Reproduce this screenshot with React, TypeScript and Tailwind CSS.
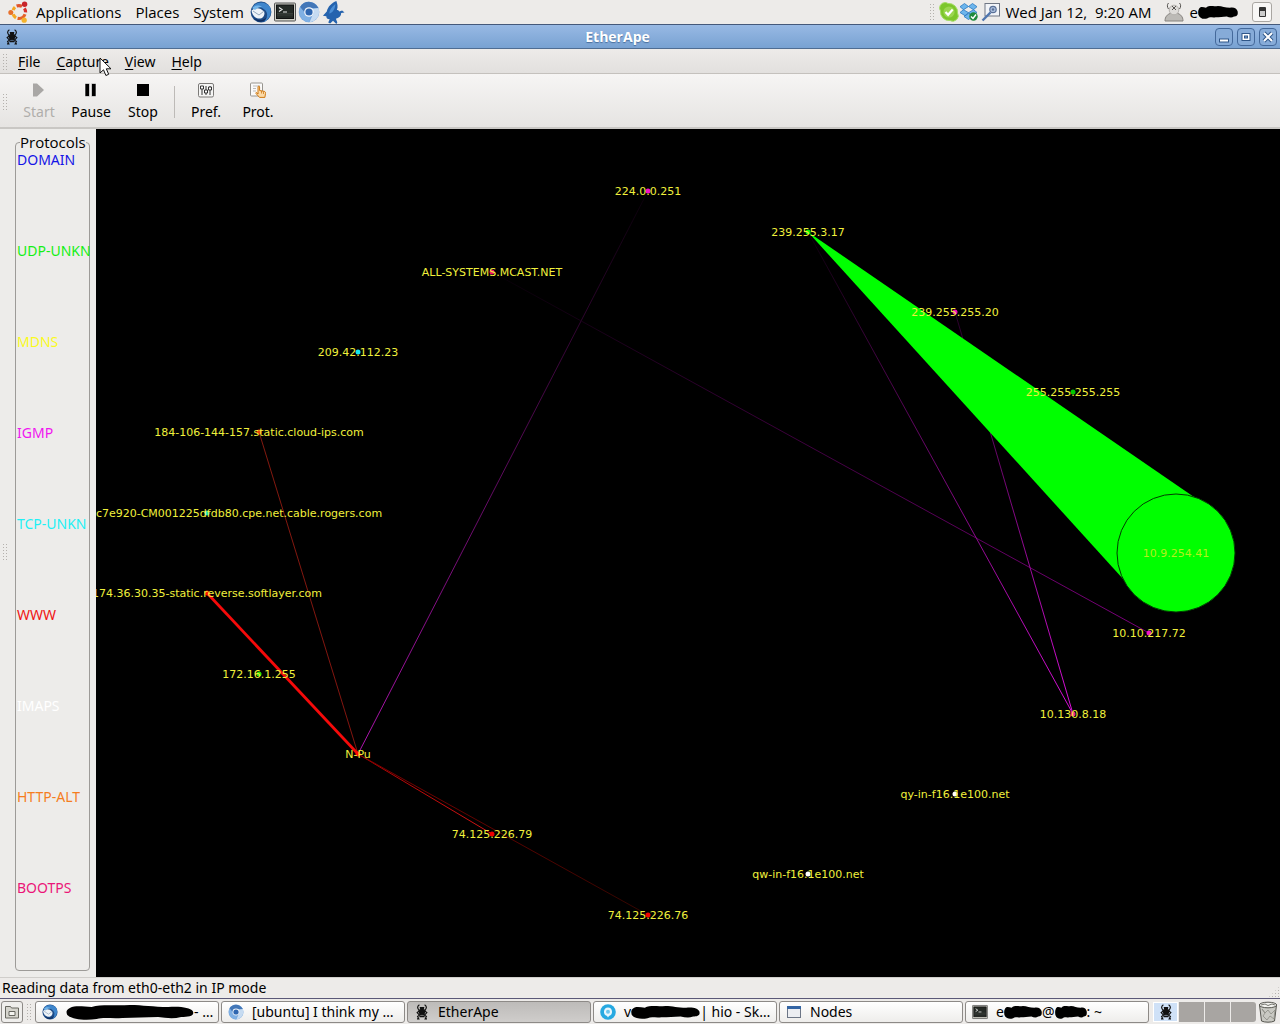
import type { ReactNode } from "react";

interface NodeItem {
    name: string;
    x: number;
    y: number;
    color: string;
    labelX?: number;
}

interface Link {
    id: string;
    from: [number, number];
    to: [number, number];
    fromColor: string;
    toColor: string;
}

const protocols = [
    { name: "DOMAIN", color: "text-[#1414e6]" },
    { name: "UDP-UNKN", color: "text-[#14f014]" },
    { name: "MDNS", color: "text-[#fafa1e]" },
    { name: "IGMP", color: "text-[#f014f0]" },
    { name: "TCP-UNKN", color: "text-[#1ef0f5]" },
    { name: "WWW", color: "text-[#f01414]" },
    { name: "IMAPS", color: "text-white" },
    { name: "HTTP-ALT", color: "text-[#f57d1e]" },
    { name: "BOOTPS", color: "text-[#eb1478]" },
];

const nodes: NodeItem[] = [
    { name: "224.0.0.251", x: 552, y: 62, color: "#f010c8" },
    { name: "239.255.3.17", x: 712, y: 103, color: "#00f000" },
    { name: "ALL-SYSTEMS.MCAST.NET", x: 396, y: 143, color: "#f01464" },
    { name: "239.255.255.20", x: 859, y: 183, color: "#f010b4" },
    { name: "209.42.112.23", x: 262, y: 223, color: "#14e6f0" },
    { name: "255.255.255.255", x: 977, y: 263, color: "#00c800" },
    { name: "184-106-144-157.static.cloud-ips.com", x: 163, y: 303, color: "#e63c00" },
    { name: "c7e920-CM001225dfdb80.cpe.net.cable.rogers.com", x: 111, y: 384, color: "#14e6c8", labelX: 143 },
    { name: "174.36.30.35-static.reverse.softlayer.com", x: 111, y: 464, color: "#ff1400" },
    { name: "10.10.217.72", x: 1053, y: 504, color: "#f014c8" },
    { name: "172.16.1.255", x: 163, y: 545, color: "#28e600" },
    { name: "10.130.8.18", x: 977, y: 585, color: "#f02882" },
    { name: "N-Pu", x: 262, y: 625, color: "#ff0a00" },
    { name: "qy-in-f16.1e100.net", x: 859, y: 665, color: "#ffffff" },
    { name: "74.125.226.79", x: 396, y: 705, color: "#f00000" },
    { name: "qw-in-f16.1e100.net", x: 712, y: 745, color: "#ffffff" },
    { name: "74.125.226.76", x: 552, y: 786, color: "#f00000" },
];

const links: Link[] = [
    { id: "l1", from: [262, 625], to: [552, 62], fromColor: "#af14af", toColor: "#080008" },
    { id: "l2", from: [1053, 504], to: [396, 143], fromColor: "#7d007d", toColor: "#050005" },
    { id: "l3", from: [977, 585], to: [712, 103], fromColor: "#dc0fdc", toColor: "#0a000a" },
    { id: "l4", from: [977, 585], to: [859, 183], fromColor: "#dc0fdc", toColor: "#280028" },
    { id: "l5", from: [163, 303], to: [262, 625], fromColor: "#82190f", toColor: "#82140f" },
    { id: "l6", from: [262, 625], to: [396, 705], fromColor: "#aa0000", toColor: "#d21414" },
    { id: "l7", from: [262, 625], to: [552, 786], fromColor: "#820000", toColor: "#320500" },
];

const tile = "flex shrink-0 items-center justify-center";

function Ape({ className }: { className: string }) {
    return (
        <svg viewBox="0 0 16 16" className={className} fill="none" stroke="#111" strokeWidth="1.2">
            <path d="M5.4.8C3 2.200 3 5 5.600 6.200M10.600.8C13 2.200 13 5 10.400 6.200" />
            <path d="M6.400 3.600h3.200l-.4 2.400H6.800zM5 6.400h6l-1.200 4.400H6.200z" fill="#111" />
            <path d="M5.200 7 3.200 8.600l2 2.200M10.800 7l2 1.600-2 2.200M6.400 10.400l-2.800 2 1.200 2.400H3M9.600 10.400l2.800 2-1.200 2.400H13M5.400 12.600h5.200" />
        </svg>
    );
}

function UbuntuLogo() {
    return (
        <svg viewBox="0 0 22 22" className="size-[22px]" fill="none">
            <path d="M7 6.2A6.4 6.4 0 0 0 5.2 9.2M5.2 13.2A6.4 6.4 0 0 0 8 16.8" stroke="#f4a824" strokeWidth="3.2" />
            <path d="M8.6 5A6.6 6.6 0 0 1 14 5.4" stroke="#e0542c" strokeWidth="3.2" />
            <path d="M16.4 7.4A6.6 6.6 0 0 1 17.6 11.4" stroke="#d8302a" strokeWidth="3.2" />
            <path d="M17 13.2A6.6 6.6 0 0 1 9.6 17.4" stroke="#e4622a" strokeWidth="3.2" />
            <circle cx="2.8" cy="11.6" r="2.5" fill="#e8702c" />
            <circle cx="16.6" cy="3.2" r="2.7" fill="#c8242a" />
            <circle cx="16.2" cy="19.2" r="2.6" fill="#f4b42c" />
        </svg>
    );
}

function Thunderbird({ className }: { className: string }) {
    return (
        <svg viewBox="0 0 22 22" className={className}>
            <circle cx="11" cy="11" r="10.4" fill="#1c4a86" />
            <path d="M3 6C6 0 16 0 20 6c2 6 0 12-6 15 4-5 4-9 1-12C11 5 6 5 3 6z" fill="#3f86cc" />
            <path d="M1.500 9.500c4-3.500 9-3 12.500 1 1.500 3-1 7-4.500 7C5 17.500 2 14 1.500 9.500z" fill="#eef3f8" />
            <path d="m3 10 6 4 4.600-3.600" stroke="#93a8bd" fill="none" />
            <path d="M2 7c3-3 7-3 10-1-3 0-5 1-7 3z" fill="#74b6ea" />
            <path d="M4 17c4 3 9 3 13-1-2 5-9 7-13 1z" fill="#0f2c5c" />
        </svg>
    );
}

function Terminal({ className }: { className: string }) {
    return (
        <svg viewBox="0 0 22 20" className={className}>
            <rect x=".5" y="1" width="21" height="18" rx="1" fill="#cfcfc6" stroke="#555" />
            <rect x="2.500" y="3" width="17" height="13.500" fill="#252a26" stroke="#111" />
            <path d="m5 5.500 3 2-3 2M9 10h4" stroke="#e8e8e8" strokeWidth="1.200" fill="none" />
            <path d="M3 13h16M3 11.500h16" stroke="#454b46" strokeWidth=".6" />
        </svg>
    );
}

function Chromium({ className }: { className: string }) {
    return (
        <svg viewBox="0 0 22 22" className={className}>
            <circle cx="11" cy="11" r="10.3" fill="#76a6dc" />
            <path d="M2 6C6-1 16-1 20.500 7H11a4.500 4.500 0 0 0-4.500 4z" fill="#4377b8" />
            <path d="M20.500 7c2 6-1 13-9 14.200L15.500 12 14 8z" fill="#c6dbf1" />
            <path d="M2 6c-3 7 2 14 9 15.200l1.500-5.500C9 16 7 14 6.500 12z" fill="#7fb0e4" />
            <circle cx="11" cy="11" r="4.800" fill="#f2f6fb" />
            <circle cx="11" cy="11" r="3.600" fill="#2e66b0" />
        </svg>
    );
}

function Bird() {
    return (
        <svg viewBox="0 0 24 24" className="size-[23px]">
            <path d="M15 0c-5 2-9 6-10 11l-4 4.500 3.500.5c0 2 1 3 3.500 3l-1.500 3.500 2 1 3-3 3.500 3.500 1-1.500-1.500-4c4-1 5.500-3 5.500-6l3.500-.5L21 10l-3 1c-.5-1-1.500-1.500-2.500-1.500C17 6 16 3 15 0z" fill="#2563ae" />
            <path d="M14 3c-4 3-6 6-6.500 10 3.500-1 6-4 6.500-10z" fill="#4c8fd6" />
        </svg>
    );
}

function Skype() {
    return (
        <svg viewBox="0 0 20 20" className="size-5">
            <path d="M6 .5a5.500 5.500 0 0 1 3 1A8.600 8.600 0 0 1 18.500 11 5.500 5.500 0 0 1 11 18.500 8.600 8.600 0 0 1 1.500 9 5.500 5.500 0 0 1 6 .5z" fill="#7cc62c" stroke="#a5dc66" />
            <circle cx="10" cy="10" r="5.600" fill="#9ad650" />
            <path d="m6.500 10 2.600 2.800 4.600-5.200" stroke="#fff" strokeWidth="2.200" fill="none" />
        </svg>
    );
}

function Dropbox() {
    return (
        <svg viewBox="0 0 20 20" className="size-5">
            <path d="m5.500 1.500 4 3-5 3.200-3.500-3zM13.500 1.500l4.500 3.200-3.500 3-5-3.200zM1 10.500l3.500-2.800 5 3-3.500 3zM18 10.500l-3.500-2.800-5 3 3.500 3zM5 14.500l4.500-3 4.500 3-4.500 3z" fill="#6db5ec" stroke="#2a78c0" strokeWidth=".8" />
            <circle cx="14.500" cy="14.500" r="4.200" fill="#1f8a3c" />
            <path d="m12 14.500 2 2 3-4" stroke="#fff" strokeWidth="1.400" fill="none" />
        </svg>
    );
}

function SearchNote() {
    return (
        <svg viewBox="0 0 20 20" className="size-5">
            <rect x="4" y="1.500" width="14.500" height="12.500" fill="#f2f4f8" stroke="#707784" />
            <path d="m1.500 18.500 8-8" stroke="#4f75ae" strokeWidth="2.400" />
            <circle cx="12" cy="7.500" r="3.200" fill="#a9bddb" stroke="#5a7097" strokeWidth="1.200" />
            <circle cx="12" cy="7.500" r="1.200" fill="#5a7097" />
        </svg>
    );
}

function Person() {
    return (
        <svg viewBox="0 0 20 20" className="size-5">
            <path d="M1 19c0-4.500 2.500-6.500 5-7.500h8c2.500 1 5 3 5 7.500z" fill="#bcbab6" stroke="#86837f" />
            <circle cx="10" cy="8" r="4.800" fill="#dedcd9" stroke="#b5b2ae" />
            <path d="m8 4 4 4m0-4L8 8M4.500 1C3 2.500 3 5 4.500 7M15.500 1C17 2.500 17 5 15.500 7" stroke="#55524f" fill="none" />
        </svg>
    );
}

function Trash() {
    return (
        <svg viewBox="0 0 20 22" className="h-[22px] w-5" fill="none" stroke="#55554f">
            <path d="m1.500 4 2 16c3 1.600 10 1.600 13 0l2-16" fill="#c9c9c3" />
            <ellipse cx="10" cy="4" rx="8.700" ry="2.800" fill="#f3f3ef" />
            <path d="m4 8 3 4-2 3 4 4 3-4 4 3 1-9-4 4-3-4-3 3z" stroke="#8b8b84" strokeWidth=".8" />
            <path d="m3 4 4-1 3 1.500L14 3l3 1" strokeWidth=".8" />
        </svg>
    );
}

// Marker stroke drawn over private names
function Scribble({ className }: { className: string }) {
    return (
        <svg viewBox="0 0 100 16" preserveAspectRatio="none" className={className}>
            <path d="M3 4C8 1 14 3 20 3 28 0 38 2 50 1c10 0 18 2 30 2 10-1 17 1 19 4 2 5-3 6-9 6-6 2-12 1-18 0-10 0-18 1-28 1-8 1-14-1-20 1C14 17 4 15 1 11 0 8 0 6 3 4z" fill="#000" />
        </svg>
    );
}

function Grip({ className }: { className: string }) {
    return (
        <span
            aria-hidden="true"
            className={`shrink-0 bg-[radial-gradient(circle,#b4b1ad_0.7px,transparent_1px)] bg-[size:3px_3px] ${className}`}
        />
    );
}

function TopPanel() {
    return (
        <header className="flex h-[25px] shrink-0 items-center border-b border-[#45597a] bg-[#edebe9] px-2 font-['Open_Sans',sans-serif] text-[15px]">
            <button className="flex items-center gap-1.5">
                <UbuntuLogo />
                Applications
            </button>
            <button className="ml-3.5">Places</button>
            <button className="ml-3.5">System</button>
            <div className="ml-1.5 flex items-center gap-0.5">
                <button aria-label="Mail"><Thunderbird className="size-[22px]" /></button>
                <button aria-label="Terminal"><Terminal className="size-[22px]" /></button>
                <button aria-label="Chromium"><Chromium className="size-[22px]" /></button>
                <button aria-label="Bird"><Bird /></button>
            </div>
            <div className="ml-auto flex items-center">
                <Grip className="mr-1 h-[18px] w-1.5" />
                <Skype />
                <Dropbox />
                <span className="ml-0.5"><SearchNote /></span>
                <time className="ml-1 whitespace-pre">Wed Jan 12,  9:20 AM</time>
                <span className="ml-3"><Person /></span>
                <button className="ml-1.5 flex items-center">
                    e<Scribble className="h-[14px] w-10" />
                </button>
                <button
                    aria-label="Shut down"
                    className={`${tile} ml-3.5 size-5 rounded-[3px] border border-[#a9a6a2] bg-[#f8f7f6]`}
                >
                    <span className="h-[10px] w-[7px] rounded-[1px] border border-t-4 border-[#333] bg-[#ccc]" />
                </button>
            </div>
        </header>
    );
}

function WindowButton({ label, children }: { label: string; children: ReactNode }) {
    return (
        <button aria-label={label} className={`${tile} size-[18px] rounded-[4px] border border-[#44699b] bg-[#86abd8]`}>
            <svg viewBox="0 0 16 16" className="size-4" fill="none" stroke="#2f5688">
                {children}
            </svg>
        </button>
    );
}

function TitleBar() {
    return (
        <div className="flex h-6 shrink-0 items-center border-b border-[#4f6d92] bg-gradient-to-b from-[#98b9e4] to-[#78a2d2] pl-1 pr-[3px]">
            <Ape className="size-4" />
            <h1 className="flex-1 text-center font-['Open_Sans',sans-serif] text-[14px] font-bold text-white [text-shadow:0_1px_1px_#4a6f9c]">
                EtherApe
            </h1>
            <div className="flex gap-1">
                <WindowButton label="Minimize">
                    <rect x="3.500" y="10" width="9" height="3" fill="#fff" />
                </WindowButton>
                <WindowButton label="Maximize">
                    <rect x="4" y="4.500" width="8" height="7" fill="#fff" />
                    <rect x="6.500" y="7" width="3" height="2" fill="#86abd8" />
                </WindowButton>
                <WindowButton label="Close">
                    <path d="m4 4 8 8m0-8-8 8" strokeWidth="4" />
                    <path d="m4 4 8 8m0-8-8 8" stroke="#fff" strokeWidth="2" />
                </WindowButton>
            </div>
        </div>
    );
}

function MenuBar() {
    return (
        <nav className="relative flex h-[25px] shrink-0 items-center border-b border-[#c4c1bd] bg-gradient-to-b from-[#edebe9] to-[#e2e0de] pl-0.5 pt-0.5">
            <Grip className="mr-2.5 h-[18px] w-1.5" />
            <div className="flex gap-4">
                {["File", "Capture", "View", "Help"].map((m) => (
                    <button key={m}>
                        <span className="underline underline-offset-2">{m[0]}</span>
                        {m.slice(1)}
                    </button>
                ))}
            </div>
            {/* Mouse pointer */}
            <svg viewBox="0 0 13 20" className="absolute left-[99px] top-[8px] h-5 w-[13px]">
                <path d="M1 1v15l3.500-3.200 2.400 5.700 2.800-1.200-2.400-5.500H12z" fill="#fff" stroke="#111" />
            </svg>
        </nav>
    );
}

function ToolButton({ label, disabled, children }: { label: string; disabled?: boolean; children: ReactNode }) {
    return (
        <button disabled={disabled} className="flex w-[52px] flex-col items-center gap-1 disabled:text-[#b0aeab]">
            <svg viewBox="0 0 16 16" className="size-4">
                {children}
            </svg>
            <span className="leading-5">{label}</span>
        </button>
    );
}

function Toolbar() {
    return (
        <div className="flex h-[55px] shrink-0 items-center border-b-2 border-[#c9c7c4] bg-gradient-to-b from-[#f6f5f4] to-[#e6e4e2] pl-0.5 pt-0.5">
            <Grip className="mr-[5px] h-[18px] w-1.5" />
            <ToolButton label="Start" disabled>
                <path d="M2 1.500h4l7 6.500-7 6.500H2z" fill="#a9a7a5" />
            </ToolButton>
            <ToolButton label="Pause">
                <path d="M2 1.500h4.500v13H2zM8.500 1.500H13v13H8.500z" fill="#000" stroke="#fff" strokeWidth=".6" />
            </ToolButton>
            <ToolButton label="Stop">
                <path d="M2 2h12v12H2z" fill="#000" />
            </ToolButton>
            <span className="mx-[5px] h-8 w-px bg-[#bdbab7]" />
            <ToolButton label="Pref.">
                <rect x=".5" y="1.500" width="15" height="13.500" rx="1.500" fill="#f5f5f4" stroke="#7c7a78" />
                <path d="M4 4v9M8 4v9M12 4v9" stroke="#333" />
                <path d="M2.500 4h3v3h-3zM6.500 8h3v3h-3zM10.500 5h3v3h-3z" fill="#fff" stroke="#333" />
            </ToolButton>
            <ToolButton label="Prot.">
                <rect x=".5" y="1" width="12" height="13" rx="1" fill="#fafafa" stroke="#98958f" />
                <path d="M3 4h7M3 6.500h3M3 9h3" stroke="#bbb" />
                <path d="M8 12V5c0-1.200 1.600-1.200 1.600 0v3.500l4.400.8c1.300.3 1.700 1 1.500 2.200l-.6 3.900H9.500L6 11.500c-.6-1 .6-1.800 2 .5z" fill="#fbd9a6" stroke="#cf7a14" />
                <path d="M11.500 9v2.500M13.500 9.500V12" stroke="#cf7a14" strokeWidth=".8" />
            </ToolButton>
        </div>
    );
}

function Sidebar() {
    return (
        <aside className="flex w-24 shrink-0 bg-[#edecea] pb-1.5 pl-0.5 pr-1.5 pt-1">
            <Grip className="mr-[7px] h-[18px] w-1.5 self-center" />
            <fieldset className="flex min-w-0 flex-1 flex-col rounded-[4px] border border-[#9d9b98]">
                <legend className="ml-1 font-['Open_Sans',sans-serif] text-[15px] leading-[18px]">Protocols</legend>
                <ul className="flex flex-1 flex-col">
                    {protocols.map((p) => (
                        <li key={p.name} className={`flex-1 whitespace-nowrap pl-px leading-[18px] ${p.color}`}>
                            {p.name}
                        </li>
                    ))}
                </ul>
            </fieldset>
        </aside>
    );
}

function TrafficDiagram() {
    return (
        <svg viewBox="0 0 1184 848" className="h-full w-full" role="img" aria-label="Network traffic">
            <defs>
                {links.map((l) => (
                    <linearGradient
                        key={l.id}
                        id={l.id}
                        gradientUnits="userSpaceOnUse"
                        x1={l.from[0]}
                        y1={l.from[1]}
                        x2={l.to[0]}
                        y2={l.to[1]}
                    >
                        <stop offset="0" stopColor={l.fromColor} />
                        <stop offset="1" stopColor={l.toColor} />
                    </linearGradient>
                ))}
            </defs>

            {links.map((l) => (
                <line
                    key={l.id}
                    x1={l.from[0]}
                    y1={l.from[1]}
                    x2={l.to[0]}
                    y2={l.to[1]}
                    stroke={`url(#${l.id})`}
                />
            ))}
            <path d="M112 463 263 624 261 626 110 465z" fill="#f50a0a" />

            {/* Heavy UDP flow */}
            <path d="M712 103 1098 368 1080 423 1028 451z" fill="#00ff00" />
            <circle cx="1080" cy="424" r="59" fill="#00ff00" stroke="#003c00" />

            {nodes.map((n) => (
                <circle key={n.name} cx={n.x} cy={n.y} r="2.500" fill={n.color} />
            ))}
            <g fill="#f0f03c" fontSize="11" textAnchor="middle" fontFamily="'DejaVu Sans', sans-serif">
                {nodes.map((n) => (
                    <text key={n.name} x={n.labelX ?? n.x} y={n.y + 4}>
                        {n.name}
                    </text>
                ))}
                <text x="1080" y="428" fill="#b4f01e">10.9.254.41</text>
            </g>
        </svg>
    );
}

function Task({ icon, active, children }: { icon: ReactNode; active?: boolean; children: ReactNode }) {
    return (
        <button
            className={`flex h-[22px] min-w-0 flex-1 items-center gap-2 whitespace-nowrap rounded-[3px] border border-[#8d8a87] px-1.5 ${
                active ? "bg-gradient-to-b from-[#bdbbb9] to-[#cfcdcb]" : "bg-gradient-to-b from-white to-[#eeedeb]"
            }`}
        >
            {icon}
            <span className="flex min-w-0 items-center whitespace-pre">{children}</span>
        </button>
    );
}

function Taskbar() {
    return (
        <footer className="flex h-[26px] shrink-0 items-center border-t border-[#5b5878] bg-[#edebe9] pl-px pr-0.5">
            <button aria-label="Show desktop" className={`${tile} size-[22px] rounded-[3px] border border-[#8d8a87] bg-[#efeeec]`}>
                <svg viewBox="0 0 16 16" className="size-4" fill="#d5d4cd" stroke="#66665f">
                    <path d="M1.500 2.500h5l1 1.500h7v10h-13z" />
                    <path d="M5 7.500h6v4H5z" fill="#f4f4f0" />
                </svg>
            </button>
            <Grip className="mx-[3px] h-[18px] w-1.5" />
            <div className="flex min-w-0 flex-1 gap-0.5">
                <Task icon={<Thunderbird className="size-4 shrink-0" />}>
                    <Scribble className="h-4 w-[128px] shrink-0" />
                    <span>- …</span>
                </Task>
                <Task icon={<Chromium className="size-4 shrink-0" />}>[ubuntu] I think my …</Task>
                <Task icon={<Ape className="size-4 shrink-0" />} active>
                    EtherApe
                </Task>
                <Task
                    icon={
                        <svg viewBox="0 0 16 16" className="size-4 shrink-0">
                            <circle cx="8" cy="8" r="7.800" fill="#27a9e1" />
                            <path d="M8 3.500a4.300 4.300 0 0 1 1 8.400l-1 1.600-1-1.600a4.300 4.300 0 0 1 1-8.400z" fill="#e8f6fd" />
                            <circle cx="8" cy="7.700" r="2" fill="#6cc5ec" />
                        </svg>
                    }
                >
                    v<Scribble className="h-[14px] w-[69px] shrink-0" />| hio - Sk…
                </Task>
                <Task
                    icon={
                        <svg viewBox="0 0 16 16" className="size-4 shrink-0">
                            <rect x="1.500" y="2.500" width="13" height="11" fill="#eceef2" stroke="#6d7686" />
                            <path d="M1 2h14v3H1z" fill="#3465a4" />
                        </svg>
                    }
                >
                    Nodes
                </Task>
                <Task icon={<Terminal className="size-4 shrink-0" />}>
                    e<Scribble className="h-[14px] w-[38px] shrink-0" />@<Scribble className="h-[14px] w-[32px] shrink-0" />: ~
                </Task>
            </div>
            <div className="ml-1 flex h-5 gap-px">
                <button aria-label="Workspace 1" className={`${tile} w-[25px] border border-white bg-[#cfe1f7]`}>
                    <Ape className="size-4" />
                </button>
                <button aria-label="Workspace 2" className="w-[25px] bg-[#a8a5a2]" />
                <button aria-label="Workspace 3" className="w-[25px] bg-[#a8a5a2]" />
                <button aria-label="Workspace 4" className="w-[25px] rounded-r-[3px] bg-[#a8a5a2]" />
            </div>
            <button aria-label="Trash" className="ml-0.5"><Trash /></button>
        </footer>
    );
}

export default function App() {
    return (
        <div className="flex h-screen flex-col overflow-hidden bg-[#edebe9] font-['Noto_Sans',sans-serif] text-[14px] leading-5 text-black">
            <TopPanel />
            <TitleBar />
            <MenuBar />
            <Toolbar />
            <main className="flex min-h-0 flex-1">
                <Sidebar />
                <div className="min-w-0 flex-1 bg-black">
                    <TrafficDiagram />
                </div>
            </main>
            <div className="flex h-[21px] shrink-0 items-center justify-between border-t border-[#d0cecb] pl-0.5">
                <span>Reading data from eth0-eth2 in IP mode</span>
                <Grip className="h-3 w-3 self-end [clip-path:polygon(100%_0,100%_100%,0_100%)]" />
            </div>
            <Taskbar />
        </div>
    );
}
